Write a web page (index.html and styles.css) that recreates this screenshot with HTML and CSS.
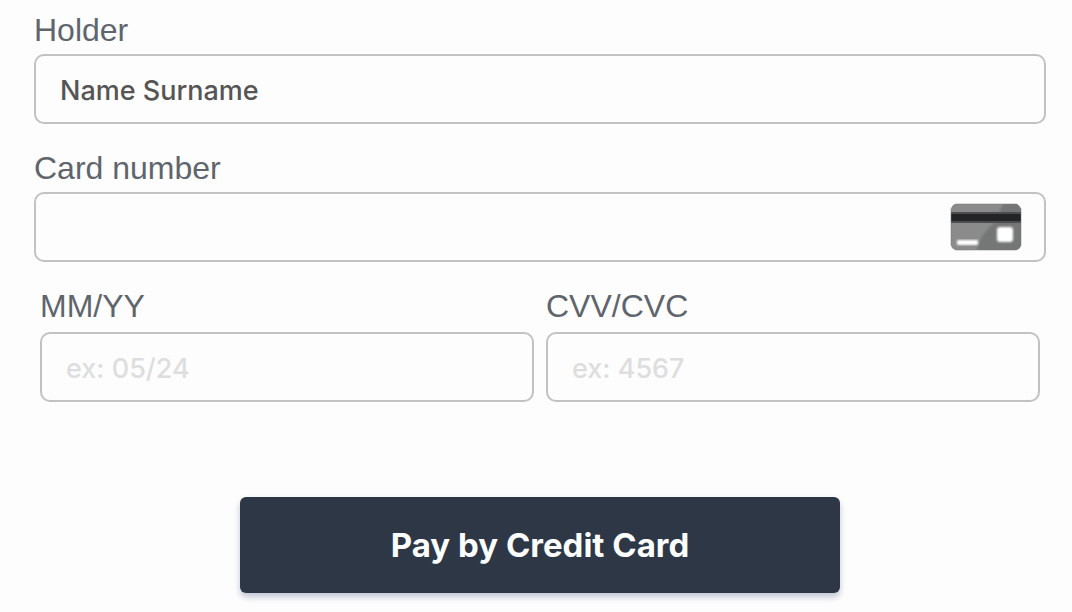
FILE: index.html
```html
<!DOCTYPE html>
<html lang="en">
<head>
<meta charset="utf-8">
<meta name="viewport" content="width=device-width, initial-scale=1">
<title>Card payment</title>
<link rel="stylesheet" href="styles.css">
</head>
<body>
<form class="payment">
  <div class="field">
    <label class="label" for="holder">Holder</label>
    <input class="input" id="holder" type="text" value="Name Surname">
  </div>
  <div class="field">
    <label class="label" for="number">Card number</label>
    <div class="card-box">
      <input class="input" id="number" type="text">
      <svg class="card-icon" viewBox="0 0 72 48" aria-hidden="true">
        <defs>
          <filter id="soft" x="-20%" y="-20%" width="140%" height="140%"><feGaussianBlur stdDeviation="1"/></filter>
          <clipPath id="card"><path d="M6 1H66Q68 1 71 6V42Q70 46 66 47H6Q2 46 1 42V6Q3 1 6 1Z"/></clipPath>
        </defs>
        <g clip-path="url(#card)">
          <path fill="#8b8b8b" d="M0 0H72V48H0Z"/>
          <path fill="#747776" filter="url(#soft)" d="M56 -3H76V51H26Q29 34 38 26Q46 19 50 7Z"/>
          <path fill="#4b4d4e" d="M0 9H72V20H0Z"/>
          <path fill="#222425" d="M0 11H72V18H0Z"/>
        </g>
        <path fill="none" stroke="#777" stroke-opacity=".5" d="M6 1H66Q68 1 71 6V42Q70 46 66 47H6Q2 46 1 42V6Q3 1 6 1Z"/>
        <rect fill="#fff" filter="url(#soft)" x="47" y="24" width="16" height="15" rx="3"/>
        <rect fill="#fff" filter="url(#soft)" x="7" y="37" width="21" height="5" rx="1"/>
      </svg>
    </div>
  </div>
  <div class="row">
    <div class="field">
      <label class="label" for="expiry">MM/YY</label>
      <input class="input" id="expiry" type="text" placeholder="ex: 05/24">
    </div>
    <div class="field">
      <label class="label" for="cvv">CVV/CVC</label>
      <input class="input" id="cvv" type="text" placeholder="ex: 4567">
    </div>
  </div>
  <button class="pay" type="submit">Pay by Credit Card</button>
</form>
</body>
</html>
```
FILE: styles.css
```css
* {
  box-sizing: border-box;
}

body {
  margin: 0;
  background: #fdfdfd;
}

.payment {
  display: flex;
  flex-direction: column;
  gap: 26px;
  padding: 12px 26px 19px 34px;
}

.field {
  display: flex;
  flex-direction: column;
  gap: 6px;
}

.label {
  font: 32px/36px "Liberation Sans", Arial, sans-serif;
  color: #5f656d;
}

.input {
  width: 100%;
  height: 70px;
  padding: 3px 24px 0;
  border: 2px solid #c2c2c2;
  border-radius: 10px;
  background: #fdfdfd;
  color: #555;
  font: 500 27px Inter, sans-serif;
}

.input::placeholder {
  color: #dedede;
  opacity: 1;
}

.card-box {
  position: relative;
}

.card-box .input {
  display: block;
  padding-right: 104px;
}

.card-icon {
  position: absolute;
  top: 11px;
  right: 24px;
  width: 72px;
  height: 48px;
}

.row {
  display: grid;
  grid-template-columns: 1fr 1fr;
  gap: 12px;
  padding: 0 6px;
}

.row .field {
  gap: 8px;
}

.pay {
  align-self: center;
  width: 600px;
  max-width: 100%;
  height: 96px;
  margin-top: 69px;
  border: 0;
  border-radius: 6px;
  background: #2d3745;
  box-shadow: 0 4px 6px #c3c7d6;
  color: #fbfdff;
  font: bold 33px Inter, sans-serif;
}
```
